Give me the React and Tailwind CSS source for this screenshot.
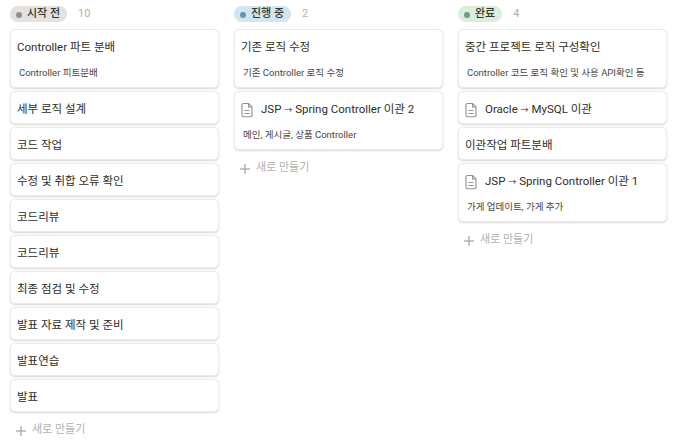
const FONT = { fontFamily: '"Roboto", "Noto Sans CJK KR", sans-serif' };

function DocIcon() {
  return (
    <svg width="14" height="16" viewBox="0 0 14 16" fill="none" stroke="#91918e" strokeWidth="1.1" className="shrink-0">
      <path d="M3.3 1.5h5.2L12 5v8.5a1.3 1.3 0 0 1-1.3 1.3H3.3A1.3 1.3 0 0 1 2 13.5V2.8a1.3 1.3 0 0 1 1.3-1.3Z" />
      <path d="M8.5 1.5V5H12" />
      <path d="M4.5 8.5h5M4.5 11.5h5" />
    </svg>
  );
}

function PlusRow() {
  return (
    <div className="flex items-center h-[24px] pl-[6px] pt-[5px] gap-[6px] mt-[4px] text-[11px] text-[#b0b0ad]">
      <svg width="10" height="10" viewBox="0 0 10 10" stroke="#8f8f8c" strokeWidth="1" className="shrink-0">
        <path d="M5 0v10M0 5h10" />
      </svg>
      <span>새로 만들기</span>
    </div>
  );
}

function Title({ text }) {
  const parts = text.split("→");
  if (parts.length === 1) return <span>{text}</span>;
  return (
    <span>
      {parts[0]}
      <span className="text-[8px]">→</span>
      {parts[1]}
    </span>
  );
}

function Card({ title, desc, doc }) {
  return (
    <div className="bg-white rounded-[5px] border border-[#ebebe9] shadow-[0_1px_2px_rgba(0,0,0,0.16)]">
      <div className={`flex items-center h-[31px] pt-[4px] text-[11.5px] font-normal text-[#2f2d28] ${doc ? "pl-[5px] gap-[7px]" : "pl-[6px]"}`}>
        {doc && <DocIcon />}
        <Title text={title} />
      </div>
      {desc && (
        <div className="h-[26px] pt-[5px] pl-[8px] text-[9.5px] leading-[14px] text-[#47453f]">
          {desc}
        </div>
      )}
    </div>
  );
}

function Column({ label, count, pill, dot, cards }) {
  return (
    <div className="w-[209px] shrink-0">
      <div className="flex items-center h-[16px] mb-[7px]">
        <div className={`flex items-center h-[16px] pt-[1px] rounded-full pl-[6px] pr-[7px] gap-[5px] text-[11px] font-medium text-[#37352f] ${pill}`}>
          <span className={`w-[6px] h-[6px] rounded-full ${dot}`} />
          <span>{label}</span>
        </div>
        <span className="text-[11px] text-[#b0b0ad] ml-[11px]">{count}</span>
      </div>
      <div className="flex flex-col gap-[3px]">
        {cards.map((c, i) => <Card key={i} {...c} />)}
      </div>
      <PlusRow />
    </div>
  );
}

export default function App() {
  return (
    <div style={FONT} className="w-[680px] h-[446px] bg-white overflow-hidden flex gap-[15px] pl-[10px] pt-[6px]">
      <Column
        label="시작 전" count="10" pill="bg-[#e3e2e0]" dot="bg-[#91918e]"
        cards={[
          { title: "Controller 파트 분배", desc: "Controller 피트분배" },
          { title: "세부 로직 설계" },
          { title: "코드 작업" },
          { title: "수정 및 취합 오류 확인" },
          { title: "코드리뷰" },
          { title: "코드리뷰" },
          { title: "최종 점검 및 수정" },
          { title: "발표 자료 제작 및 준비" },
          { title: "발표연습" },
          { title: "발표" },
        ]}
      />
      <Column
        label="진행 중" count="2" pill="bg-[#d3e5ef]" dot="bg-[#5b97bd]"
        cards={[
          { title: "기존 로직 수정", desc: "기존 Controller 로직 수정" },
          { title: "JSP → Spring Controller 이관 2", desc: "메인, 게시글, 상품 Controller", doc: true },
        ]}
      />
      <Column
        label="완료" count="4" pill="bg-[#dbeddb]" dot="bg-[#6c9b7d]"
        cards={[
          { title: "중간 프로젝트 로직 구성확인", desc: "Controller 코드 로직 확인 및 사용 API확인 등" },
          { title: "Oracle → MySQL 이관", doc: true },
          { title: "이관작업 파트분배" },
          { title: "JSP → Spring Controller 이관 1", desc: "가게 업데이트, 가게 추가", doc: true },
        ]}
      />
    </div>
  );
}
